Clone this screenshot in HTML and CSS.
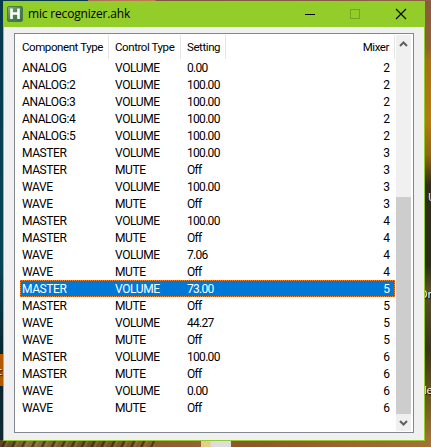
FILE: index.html
```
<!DOCTYPE html>
<html lang="en">
<head>
<meta charset="utf-8">
<title>mic recognizer.ahk</title>
<link rel="stylesheet" href="styles.css">
</head>
<body>
<div class="desktop">
  <span class="label label-left">t</span>
  <span class="label label-u">U</span>
  <span class="label label-on">Or</span>
  <span class="label label-le">le</span>
  <i class="strip"></i>
  <main class="window">
    <header class="titlebar">
      <svg class="app-icon" width="16" height="16" viewBox="0 0 16 16"><defs><linearGradient id="g" x2="1" y2="1"><stop stop-color="#8fb08f"/><stop offset=".5" stop-color="#4c8150"/><stop offset="1" stop-color="#34753a"/></linearGradient></defs><rect x=".5" y=".5" width="15" height="15" rx="1.500" fill="url(#g)" stroke="#477a49"/><path d="M4.500 2.500v10.500M11.500 2.500v10.500M4.500 7.500h7" fill="none" stroke="#fff" stroke-width="2.600"/></svg>
      <h1>mic recognizer.ahk</h1>
      <svg class="controls" width="104" height="26" viewBox="0 0 104 26" fill="none" shape-rendering="crispEdges"><path d="M0 13.500h10" stroke="#000"/><rect x="45.500" y="8.500" width="9" height="9" stroke="#76a421"/><path d="M91 8l10 10M101 8L91 18" stroke="#000" stroke-width="1.100" shape-rendering="auto"/></svg>
    </header>
    <section class="list">
      <div class="table">
        <div class="row head"><span>Component Type</span><span>Control Type</span><span>Setting</span><span>Mixer</span></div>
        <div id="rows"></div>
      </div>
      <div class="scrollbar">
        <svg width="15" height="17" viewBox="0 0 15 17"><path d="M4 11L7.500 7.500l3.500 3.500" fill="none" stroke="#606060" stroke-width="2"/></svg>
        <div class="thumb"></div>
        <svg width="15" height="17" viewBox="0 0 15 17"><path d="M4 7l3.500 3.500L11 7" fill="none" stroke="#606060" stroke-width="2"/></svg>
      </div>
    </section>
  </main>
</div>
<script src="script.js"></script>
</body>
</html>
```
FILE: styles.css
```
* { box-sizing: border-box; }
body { margin: 0; width: 431px; height: 447px; overflow: hidden; }
.desktop {
  position: relative; width: 431px; height: 447px; padding: 1px 6px 6px 3px;
  background:
    linear-gradient(#b35900, #b35900) 0 354px / 3px 32px no-repeat,
    linear-gradient(#06394c, #074456 60%, #062630 80%, #102a30) 0 0 / 4px 440px no-repeat,
    linear-gradient(90deg, #06394c 88px, #a57050 88px, #c17c52 155px, #805540 156px, #8d6145) 0 0 / 431px 1px no-repeat,
    repeating-linear-gradient(115deg, #2b1d0e00 0 3px, #2b1d0ea0 4px 5px, #c9a06a50 7px, #2b1d0e00 9px) 0 441px / 155px 6px no-repeat,
    linear-gradient(90deg, #5c4428, #8a6c44 30px, #6b4f2c 90px, #8a5c35 150px, #95603a 200px, #8d562c 240px, #9b6331 340px, #a47139) 0 440px / 431px 7px no-repeat,
    linear-gradient(#8b5941 0, #8e5e36 45px, #a76f18 60px, #b67a12 120px, #926414 155px, #302b1b 185px, #2b2b1c 265px, #58502c 290px, #39331e 350px, #786025 410px, #a2713c 440px);
}
.strip { position: absolute; left: 201px; top: 441px; width: 30px; height: 6px; background: linear-gradient(90deg, #e5cd8b 9px, #ddd 10px); }
.label { position: absolute; font: 11px/14px "Open Sans", sans-serif; color: #fff; text-shadow: 1px 1px 1px #000; }
.label-left { left: -2px; top: 364px; }
.label-u { left: 428px; top: 190px; }
.label-on { left: 419px; top: 287px; }
.label-le { left: 424px; top: 383px; letter-spacing: -.3px; }
.window { position: relative; width: 422px; height: 440px; border: 1px solid #92cd29; border-top: 0; background: #f0f0f0; }
.titlebar { display: flex; align-items: center; height: 26px; margin: 0 -1px; padding-left: 4px; background: #92cd29; }
.app-icon { flex: none; }
h1 { margin: 0 0 0 5px; width: 277px; font: 12px/26px "Open Sans", sans-serif; letter-spacing: -.18px; color: #000; white-space: nowrap; }
.controls { flex: none; }
.list { display: flex; justify-content: space-between; width: 400px; height: 400px; margin: 6px 0 0 10px; padding: 1px 2px 1px 5px; border: 1px solid #828790; background: #fff; }
.table { width: 375px; font: 12px/19px Roboto, sans-serif; color: #000; }
.row { display: grid; grid-template-columns: 93px 72px 51px 159px; height: 17px; white-space: nowrap; }
.row span { padding-left: 2px; letter-spacing: -.4px; }
.row span:nth-child(3) { letter-spacing: -.7px; }
.row span:last-child { padding: 0 5px 0 0; text-align: right; letter-spacing: 0; }
.head { height: 24px; font-size: 11.5px; line-height: 24px; grid-template-columns: 89px 72px 45px 169px; }
.head span, .head span:nth-child(3), .head span:last-child { border-right: 1px solid #e5e5e5; letter-spacing: -.42px; }
.head span:nth-child(2), .head span:nth-child(3) { padding-left: 6px; }
.selected { background: #0078d7; color: #fff; outline: 1px dotted #ff8728; outline-offset: -1px; }
.scrollbar { display: flex; flex-direction: column; width: 15px; background: #f0f0f0; }
.scrollbar svg { flex: none; display: block; }
.thumb { height: 217px; margin-top: auto; background: #cdcdcd; }
```
FILE: script.js
```
const rows = [
  ["ANALOG", "VOLUME", "0.00", 2],
  ["ANALOG:2", "VOLUME", "100.00", 2],
  ["ANALOG:3", "VOLUME", "100.00", 2],
  ["ANALOG:4", "VOLUME", "100.00", 2],
  ["ANALOG:5", "VOLUME", "100.00", 2],
  ["MASTER", "VOLUME", "100.00", 3],
  ["MASTER", "MUTE", "Off", 3],
  ["WAVE", "VOLUME", "100.00", 3],
  ["WAVE", "MUTE", "Off", 3],
  ["MASTER", "VOLUME", "100.00", 4],
  ["MASTER", "MUTE", "Off", 4],
  ["WAVE", "VOLUME", "7.06", 4],
  ["WAVE", "MUTE", "Off", 4],
  ["MASTER", "VOLUME", "73.00", 5],
  ["MASTER", "MUTE", "Off", 5],
  ["WAVE", "VOLUME", "44.27", 5],
  ["WAVE", "MUTE", "Off", 5],
  ["MASTER", "VOLUME", "100.00", 6],
  ["MASTER", "MUTE", "Off", 6],
  ["WAVE", "VOLUME", "0.00", 6],
  ["WAVE", "MUTE", "Off", 6]
];
const selectedIndex = 13;
document.getElementById("rows").innerHTML = rows.map((row, i) =>
  `<div class="row${i === selectedIndex ? " selected" : ""}">${row.map(c => `<span>${c}</span>`).join("")}</div>`
).join("");
```
